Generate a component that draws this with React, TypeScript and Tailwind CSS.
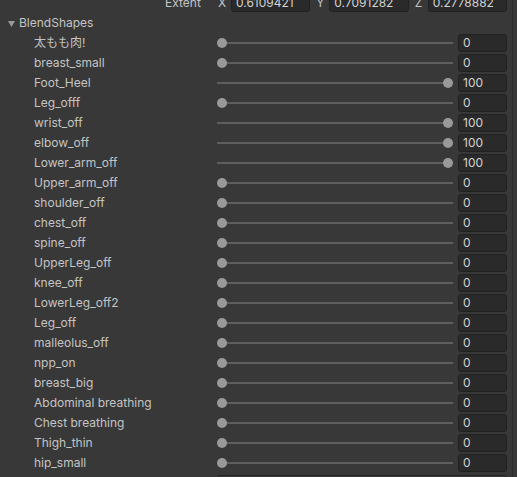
const shapes: { name: string; value: number }[] = [
  { name: '太もも肉!', value: 0 },
  { name: 'breast_small', value: 0 },
  { name: 'Foot_Heel', value: 100 },
  { name: 'Leg_offf', value: 0 },
  { name: 'wrist_off', value: 100 },
  { name: 'elbow_off', value: 100 },
  { name: 'Lower_arm_off', value: 100 },
  { name: 'Upper_arm_off', value: 0 },
  { name: 'shoulder_off', value: 0 },
  { name: 'chest_off', value: 0 },
  { name: 'spine_off', value: 0 },
  { name: 'UpperLeg_off', value: 0 },
  { name: 'knee_off', value: 0 },
  { name: 'LowerLeg_off2', value: 0 },
  { name: 'Leg_off', value: 0 },
  { name: 'malleolus_off', value: 0 },
  { name: 'npp_on', value: 0 },
  { name: 'breast_big', value: 0 },
  { name: 'Abdominal breathing', value: 0 },
  { name: 'Chest breathing', value: 0 },
  { name: 'Thigh_thin', value: 0 },
  { name: 'hip_small', value: 0 },
];

function Field({ value }: { value: string }) {
  return (
    <div className="h-[18px] flex items-center rounded-[3px] bg-[#2a2a2a] border border-[#212121] pl-[4px] text-[#d2d2d2] overflow-hidden whitespace-nowrap">
      {value}
    </div>
  );
}

function Slider({ value }: { value: number }) {
  return (
    <div className="relative h-[20px] w-[236px] flex items-center">
      <div className="h-[2px] w-full bg-[#5e5e5e]" />
      {/* thumb travels over 226px of the track */}
      <div
        className="absolute top-[5px] h-[10px] w-[10px] rounded-full bg-[#999999]"
        style={{ left: `${(value / 100) * 226}px` }}
      />
    </div>
  );
}

function Axis({ label, value }: { label: string; value: string }) {
  return (
    <div className="flex items-center">
      <span className="w-[14px] pl-[1px] text-[#c4c4c4]">{label}</span>
      <div className="flex-1">
        <Field value={value} />
      </div>
    </div>
  );
}

export default function App() {
  return (
    <div
      className="w-[517px] h-[477px] overflow-hidden bg-[#383838] text-[12px] flex"
      style={{ fontFamily: 'Inter, "Noto Sans CJK JP", sans-serif' }}
    >
      <div className="w-[513px] border-r border-[#2b2b2b] -mt-[7px]">
        {/* Extent row, cut off at the top */}
        <div className="h-[20px] flex items-center">
          <span className="w-[217px] pl-[165px] text-[#c4c4c4]">Extent</span>
          <div className="w-[290px] grid grid-cols-3 gap-[5px]">
            <Axis label="X" value="0.6109421" />
            <Axis label="Y" value="0.7091282" />
            <Axis label="Z" value="0.2778882" />
          </div>
        </div>

        {/* Foldout */}
        <div className="h-[20px] flex items-center text-[#c4c4c4]">
          <svg width="19" height="20" viewBox="0 0 19 20" className="shrink-0">
            <path d="M8 8 L15 8 L11.5 14 Z" fill="#9a9a9a" />
          </svg>
          <span>BlendShapes</span>
        </div>

        {shapes.map((s) => (
          <div key={s.name} className="h-[20px] flex items-center">
            <span className="w-[217px] pl-[34px] text-[#c4c4c4] whitespace-nowrap">
              {s.name}
            </span>
            <Slider value={s.value} />
            <div className="w-[49px] ml-[5px]">
              <Field value={String(s.value)} />
            </div>
          </div>
        ))}

        <div className="h-[20px] flex items-start pt-[2px]">
          <div className="ml-[217px] w-[290px] h-[18px] rounded-[3px] bg-[#3a3a3a] border border-[#242424]" />
        </div>
      </div>
    </div>
  );
}
